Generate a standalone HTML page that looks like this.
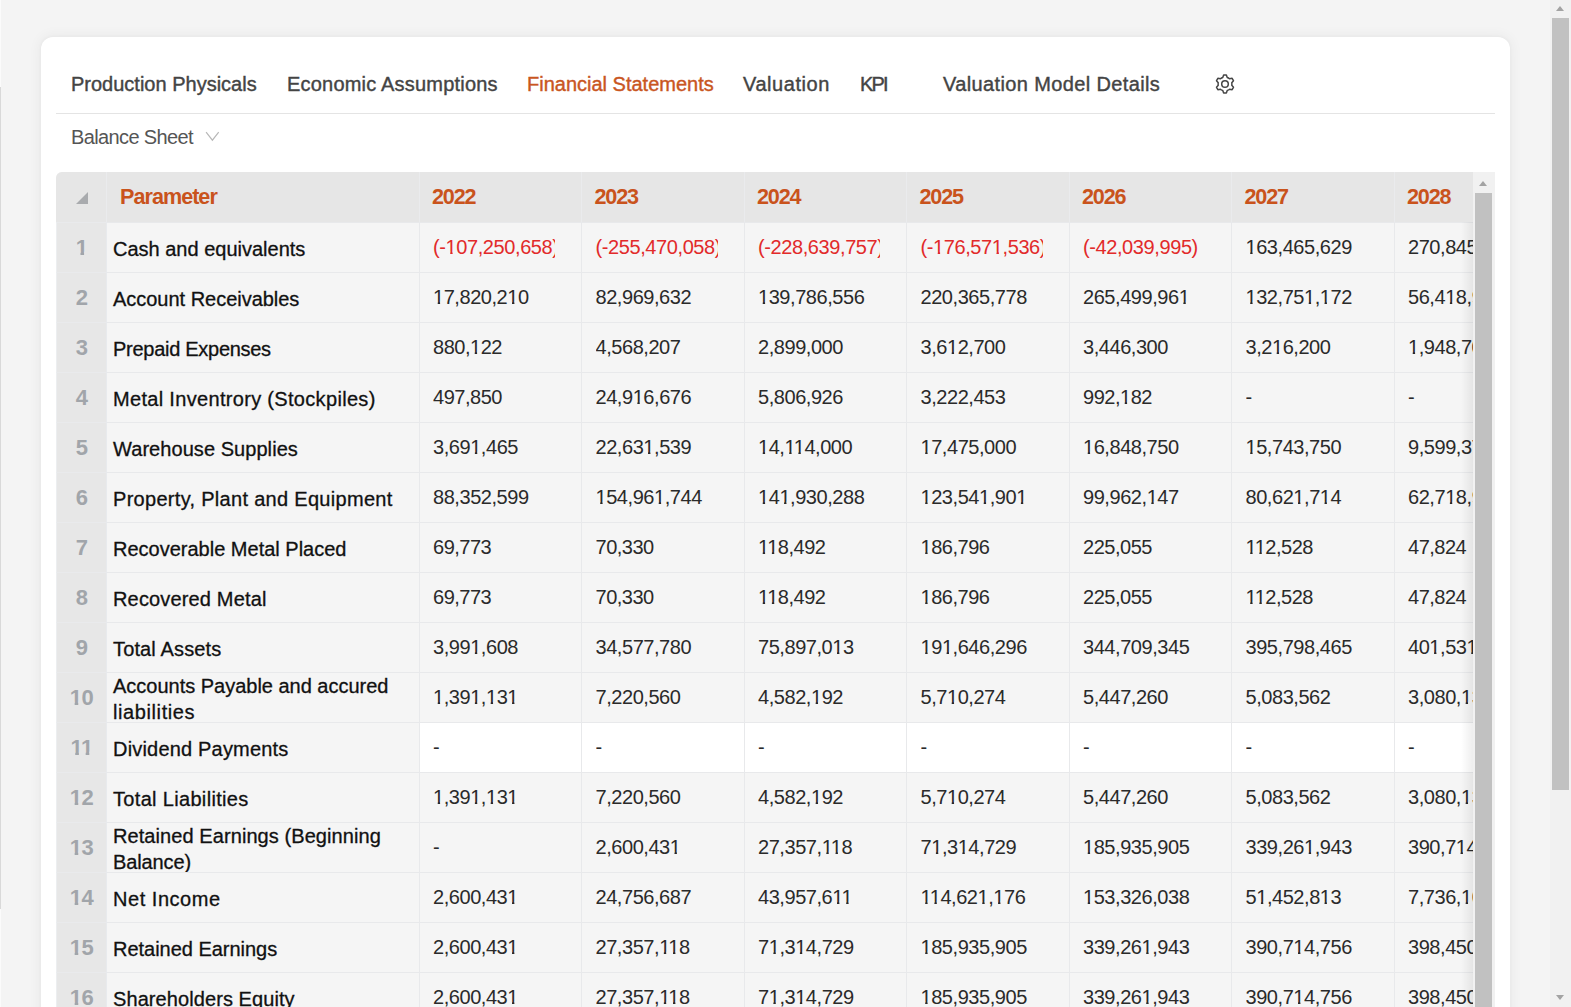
<!DOCTYPE html>
<html><head><meta charset="utf-8">
<style>
*{box-sizing:border-box;margin:0;padding:0}
html,body{width:1571px;height:1007px;overflow:hidden;background:#f4f4f4;font-family:"Liberation Sans",sans-serif}
#edge{position:absolute;left:0;top:87px;width:1px;height:822px;background:#d9d9d9}
#edgew1{position:absolute;left:0;top:0;width:1px;height:87px;background:#fbfbfb}
#edgew2{position:absolute;left:0;top:909px;width:1px;height:98px;background:#fbfbfb}
#card{position:absolute;left:41px;top:37px;width:1469px;height:1100px;background:#fff;border-radius:12px;box-shadow:0 0 3px 1px rgba(0,0,0,0.025),0 0 12px 3px rgba(0,0,0,0.04)}
.tab{position:absolute;top:72px;font-size:20px;line-height:24px;color:#444;white-space:nowrap;-webkit-text-stroke:0.4px #444}
.tab.act{color:#c9561f;-webkit-text-stroke:0.4px #c9561f}
#divider{position:absolute;left:56px;top:113px;width:1439px;height:1px;background:#e4e4e4}
#bs{position:absolute;left:71px;top:125px;font-size:20px;letter-spacing:-0.62px;line-height:24px;color:#555;white-space:nowrap}
#chev{position:absolute;left:205px;top:130px}
#gear{position:absolute;left:1213px;top:72px}
#tbl{position:absolute;left:56px;top:172px;width:1417px;height:900px;overflow:hidden;border-top-left-radius:6px;background:#f5f5f5}
.hc{position:absolute;background:#e6e6e6;border-left:1px solid #eaebed}
.hc.rn{border-left:none}
.ht{position:absolute;top:13px;font-weight:bold;font-size:21.6px;line-height:24px;color:#c9531c}
.tri{position:absolute;left:20px;top:20px;width:0;height:0;border-left:12px solid transparent;border-bottom:12px solid #a9abae}
.rnc{position:absolute;left:0;width:50px;height:50px;background:#e7e7e7;border-top:1px solid #e9eaec;border-left:1px solid #eceef0}
.rnc span{position:absolute;left:0;right:0;text-align:center;top:13px;font-weight:bold;font-size:22px;letter-spacing:-0.6px;line-height:24px;color:#a1a5aa}
.pc{position:absolute;left:50px;width:313px;height:50px;background:#f5f5f5;border-top:1px solid #e8e9eb;border-left:1px solid #e8eaed}
.pc span{position:absolute;left:6px;top:14px;font-size:20px;line-height:24px;color:#111;white-space:nowrap;-webkit-text-stroke:0.3px #111}
.pc.two span{top:0px;line-height:26px}
.dc{position:absolute;width:163px;height:50px;background:#f5f5f5;border-top:1px solid #e8e9eb;border-left:1px solid #e8e9eb}
.dc.wh{background:#fff}
.dv{position:absolute;left:13px;top:12px;width:122px;overflow:hidden;white-space:nowrap;font-size:20px;line-height:24px;color:#2a2a2a}
.o{font-style:normal;clip-path:polygon(-2px -2px,14px -2px,14px 15.8px,7.1px 15.8px,7.1px 30px,4.7px 30px,4.7px 15.8px,-2px 15.8px)}
.ob{font-style:normal;clip-path:polygon(-2px -2px,14px -2px,14px 16.7px,8.4px 16.7px,8.4px 30px,4.8px 30px,4.8px 16.7px,-2px 16.7px)}
.dv.neg{color:#e22a2a}
#tsb{position:absolute;left:1473px;top:172px;width:22px;height:900px;background:#f1f1f1}
#tsbthumb{position:absolute;left:2px;top:21px;width:17px;height:900px;background:#c1c1c1}
#tsbup{position:absolute;left:5.7px;top:9px;width:0;height:0;border-left:4.9px solid transparent;border-right:4.9px solid transparent;border-bottom:5px solid #a3a3a3}
#shade{position:absolute;left:1461px;top:222px;width:12px;height:800px;background:linear-gradient(to right,rgba(0,0,0,0),rgba(0,0,0,0.065))}
#psb{position:absolute;left:1550px;top:0;width:21px;height:1007px;background:#f1f1f1}
#psbthumb{position:absolute;left:2px;top:18px;width:17px;height:772px;background:#c1c1c1}
#psbup{position:absolute;left:5.8px;top:6px;width:0;height:0;border-left:4.7px solid transparent;border-right:4.7px solid transparent;border-bottom:5px solid #a3a3a3}
#psbdn{position:absolute;left:6px;top:995px;width:0;height:0;border-left:4.5px solid transparent;border-right:4.5px solid transparent;border-top:5px solid #a3a3a3}
</style></head><body>
<div id="edgew1"></div><div id="edge"></div><div id="edgew2"></div>
<div id="card"></div>
<div class="tab" style="left:71px">Production Physicals</div>
<div class="tab" style="left:287px;letter-spacing:0.2px">Economic Assumptions</div>
<div class="tab act" style="left:527px">Financial Statements</div>
<div class="tab" style="left:743px;letter-spacing:0.55px">Valuation</div>
<div class="tab" style="left:860px;letter-spacing:-1.9px">KPI</div>
<div class="tab" style="left:943px;letter-spacing:0.37px">Valuation Model Details</div>
<svg id="gear" width="24" height="24" viewBox="0 0 24 24"><path d="M9.75 5.48L10.65 3.00L13.35 3.00L14.25 5.48A6.9 6.9 0 0 1 16.53 6.79L19.12 6.34L20.47 8.66L18.77 10.68A6.9 6.9 0 0 1 18.77 13.32L20.47 15.34L19.12 17.66L16.53 17.21A6.9 6.9 0 0 1 14.25 18.52L13.35 21.00L10.65 21.00L9.75 18.52A6.9 6.9 0 0 1 7.47 17.21L4.88 17.66L3.53 15.34L5.23 13.32A6.9 6.9 0 0 1 5.23 10.68L3.53 8.66L4.88 6.34L7.47 6.79A6.9 6.9 0 0 1 9.75 5.48Z" fill="none" stroke="#454545" stroke-width="1.5" stroke-linejoin="round"/><circle cx="12" cy="12" r="3.3" fill="none" stroke="#454545" stroke-width="1.5"/></svg>
<div id="divider"></div>
<div id="bs">Balance Sheet</div>
<svg id="chev" width="16" height="13" viewBox="0 0 16 13"><path d="M1.1 2.1 L7.4 10.2 L13.7 2.1" fill="none" stroke="#b8b8b8" stroke-width="1.2"/></svg>
<div id="tbl">
<div class="hc rn" style="left:0;top:0;width:50px;height:50px"><i class="tri"></i></div><div class="hc" style="left:50px;top:0;width:313px;height:50px"><span class="ht" style="left:13px;letter-spacing:-0.98px">Parameter</span></div><div class="hc yc" style="left:363px;top:0;width:163px;height:50px"><span class="ht" style="left:12px;letter-spacing:-1.19px">2022</span></div><div class="hc yc" style="left:525px;top:0;width:163px;height:50px"><span class="ht" style="left:12.5px;letter-spacing:-1.19px">2023</span></div><div class="hc yc" style="left:688px;top:0;width:163px;height:50px"><span class="ht" style="left:12px;letter-spacing:-1.19px">2024</span></div><div class="hc yc" style="left:850px;top:0;width:163px;height:50px"><span class="ht" style="left:12.5px;letter-spacing:-1.19px">2025</span></div><div class="hc yc" style="left:1013px;top:0;width:163px;height:50px"><span class="ht" style="left:12px;letter-spacing:-1.19px">2026</span></div><div class="hc yc" style="left:1175px;top:0;width:163px;height:50px"><span class="ht" style="left:12.5px;letter-spacing:-1.19px">2027</span></div><div class="hc yc" style="left:1338px;top:0;width:163px;height:50px"><span class="ht" style="left:12px;letter-spacing:-1.19px">2028</span></div>
<div class="rnc" style="top:50px"><span><i class="ob">1</i></span></div><div class="pc" style="top:50px"><span style="letter-spacing:0.000px">Cash and equivalents</span></div><div class="dc" style="left:363px;top:50px"><div class="dv neg" style="left:13px;letter-spacing:-0.404px">(-<i class="o">1</i>07,250,658)</div></div><div class="dc" style="left:525px;top:50px"><div class="dv neg" style="left:13.5px;letter-spacing:-0.404px">(-255,470,058)</div></div><div class="dc" style="left:688px;top:50px"><div class="dv neg" style="left:13px;letter-spacing:-0.404px">(-228,639,757)</div></div><div class="dc" style="left:850px;top:50px"><div class="dv neg" style="left:13.5px;letter-spacing:-0.404px">(-<i class="o">1</i>76,57<i class="o">1</i>,536)</div></div><div class="dc" style="left:1013px;top:50px"><div class="dv neg" style="left:13px;letter-spacing:-0.400px">(-42,039,995)</div></div><div class="dc" style="left:1175px;top:50px"><div class="dv" style="left:13.5px;letter-spacing:-0.445px"><i class="o">1</i>63,465,629</div></div><div class="dc" style="left:1338px;top:50px"><div class="dv" style="left:13px;letter-spacing:-0.445px">270,845,000</div></div><div class="rnc" style="top:100px"><span>2</span></div><div class="pc" style="top:100px"><span style="letter-spacing:-0.022px">Account Receivables</span></div><div class="dc" style="left:363px;top:100px"><div class="dv" style="left:13px;letter-spacing:-0.445px"><i class="o">1</i>7,820,2<i class="o">1</i>0</div></div><div class="dc" style="left:525px;top:100px"><div class="dv" style="left:13.5px;letter-spacing:-0.445px">82,969,632</div></div><div class="dc" style="left:688px;top:100px"><div class="dv" style="left:13px;letter-spacing:-0.445px"><i class="o">1</i>39,786,556</div></div><div class="dc" style="left:850px;top:100px"><div class="dv" style="left:13.5px;letter-spacing:-0.445px">220,365,778</div></div><div class="dc" style="left:1013px;top:100px"><div class="dv" style="left:13px;letter-spacing:-0.445px">265,499,96<i class="o">1</i></div></div><div class="dc" style="left:1175px;top:100px"><div class="dv" style="left:13.5px;letter-spacing:-0.445px"><i class="o">1</i>32,75<i class="o">1</i>,<i class="o">1</i>72</div></div><div class="dc" style="left:1338px;top:100px"><div class="dv" style="left:13px;letter-spacing:-0.445px">56,4<i class="o">1</i>8,900</div></div><div class="rnc" style="top:150px"><span>3</span></div><div class="pc" style="top:150px"><span style="letter-spacing:-0.280px">Prepaid Expenses</span></div><div class="dc" style="left:363px;top:150px"><div class="dv" style="left:13px;letter-spacing:-0.482px">880,<i class="o">1</i>22</div></div><div class="dc" style="left:525px;top:150px"><div class="dv" style="left:13.5px;letter-spacing:-0.445px">4,568,207</div></div><div class="dc" style="left:688px;top:150px"><div class="dv" style="left:13px;letter-spacing:-0.445px">2,899,000</div></div><div class="dc" style="left:850px;top:150px"><div class="dv" style="left:13.5px;letter-spacing:-0.445px">3,6<i class="o">1</i>2,700</div></div><div class="dc" style="left:1013px;top:150px"><div class="dv" style="left:13px;letter-spacing:-0.445px">3,446,300</div></div><div class="dc" style="left:1175px;top:150px"><div class="dv" style="left:13.5px;letter-spacing:-0.445px">3,2<i class="o">1</i>6,200</div></div><div class="dc" style="left:1338px;top:150px"><div class="dv" style="left:13px;letter-spacing:-0.445px"><i class="o">1</i>,948,700</div></div><div class="rnc" style="top:200px"><span>4</span></div><div class="pc" style="top:200px"><span style="letter-spacing:0.318px">Metal Inventrory (Stockpiles)</span></div><div class="dc" style="left:363px;top:200px"><div class="dv" style="left:13px;letter-spacing:-0.482px">497,850</div></div><div class="dc" style="left:525px;top:200px"><div class="dv" style="left:13.5px;letter-spacing:-0.445px">24,9<i class="o">1</i>6,676</div></div><div class="dc" style="left:688px;top:200px"><div class="dv" style="left:13px;letter-spacing:-0.445px">5,806,926</div></div><div class="dc" style="left:850px;top:200px"><div class="dv" style="left:13.5px;letter-spacing:-0.445px">3,222,453</div></div><div class="dc" style="left:1013px;top:200px"><div class="dv" style="left:13px;letter-spacing:-0.482px">992,<i class="o">1</i>82</div></div><div class="dc" style="left:1175px;top:200px"><div class="dv" style="left:13.5px;letter-spacing:0.000px">-</div></div><div class="dc" style="left:1338px;top:200px"><div class="dv" style="left:13px;letter-spacing:0.000px">-</div></div><div class="rnc" style="top:250px"><span>5</span></div><div class="pc" style="top:250px"><span style="letter-spacing:0.059px">Warehouse Supplies</span></div><div class="dc" style="left:363px;top:250px"><div class="dv" style="left:13px;letter-spacing:-0.445px">3,69<i class="o">1</i>,465</div></div><div class="dc" style="left:525px;top:250px"><div class="dv" style="left:13.5px;letter-spacing:-0.445px">22,63<i class="o">1</i>,539</div></div><div class="dc" style="left:688px;top:250px"><div class="dv" style="left:13px;letter-spacing:-0.445px"><i class="o">1</i>4,<i class="o">1</i><i class="o">1</i>4,000</div></div><div class="dc" style="left:850px;top:250px"><div class="dv" style="left:13.5px;letter-spacing:-0.445px"><i class="o">1</i>7,475,000</div></div><div class="dc" style="left:1013px;top:250px"><div class="dv" style="left:13px;letter-spacing:-0.445px"><i class="o">1</i>6,848,750</div></div><div class="dc" style="left:1175px;top:250px"><div class="dv" style="left:13.5px;letter-spacing:-0.445px"><i class="o">1</i>5,743,750</div></div><div class="dc" style="left:1338px;top:250px"><div class="dv" style="left:13px;letter-spacing:-0.445px">9,599,375</div></div><div class="rnc" style="top:300px"><span>6</span></div><div class="pc" style="top:300px"><span style="letter-spacing:0.300px">Property, Plant and Equipment</span></div><div class="dc" style="left:363px;top:300px"><div class="dv" style="left:13px;letter-spacing:-0.445px">88,352,599</div></div><div class="dc" style="left:525px;top:300px"><div class="dv" style="left:13.5px;letter-spacing:-0.445px"><i class="o">1</i>54,96<i class="o">1</i>,744</div></div><div class="dc" style="left:688px;top:300px"><div class="dv" style="left:13px;letter-spacing:-0.445px"><i class="o">1</i>4<i class="o">1</i>,930,288</div></div><div class="dc" style="left:850px;top:300px"><div class="dv" style="left:13.5px;letter-spacing:-0.445px"><i class="o">1</i>23,54<i class="o">1</i>,90<i class="o">1</i></div></div><div class="dc" style="left:1013px;top:300px"><div class="dv" style="left:13px;letter-spacing:-0.445px">99,962,<i class="o">1</i>47</div></div><div class="dc" style="left:1175px;top:300px"><div class="dv" style="left:13.5px;letter-spacing:-0.445px">80,62<i class="o">1</i>,7<i class="o">1</i>4</div></div><div class="dc" style="left:1338px;top:300px"><div class="dv" style="left:13px;letter-spacing:-0.445px">62,7<i class="o">1</i>8,900</div></div><div class="rnc" style="top:350px"><span>7</span></div><div class="pc" style="top:350px"><span style="letter-spacing:0.000px">Recoverable Metal Placed</span></div><div class="dc" style="left:363px;top:350px"><div class="dv" style="left:13px;letter-spacing:-0.489px">69,773</div></div><div class="dc" style="left:525px;top:350px"><div class="dv" style="left:13.5px;letter-spacing:-0.489px">70,330</div></div><div class="dc" style="left:688px;top:350px"><div class="dv" style="left:13px;letter-spacing:-0.482px"><i class="o">1</i><i class="o">1</i>8,492</div></div><div class="dc" style="left:850px;top:350px"><div class="dv" style="left:13.5px;letter-spacing:-0.482px"><i class="o">1</i>86,796</div></div><div class="dc" style="left:1013px;top:350px"><div class="dv" style="left:13px;letter-spacing:-0.482px">225,055</div></div><div class="dc" style="left:1175px;top:350px"><div class="dv" style="left:13.5px;letter-spacing:-0.482px"><i class="o">1</i><i class="o">1</i>2,528</div></div><div class="dc" style="left:1338px;top:350px"><div class="dv" style="left:13px;letter-spacing:-0.489px">47,824</div></div><div class="rnc" style="top:400px"><span>8</span></div><div class="pc" style="top:400px"><span style="letter-spacing:0.157px">Recovered Metal</span></div><div class="dc" style="left:363px;top:400px"><div class="dv" style="left:13px;letter-spacing:-0.489px">69,773</div></div><div class="dc" style="left:525px;top:400px"><div class="dv" style="left:13.5px;letter-spacing:-0.489px">70,330</div></div><div class="dc" style="left:688px;top:400px"><div class="dv" style="left:13px;letter-spacing:-0.482px"><i class="o">1</i><i class="o">1</i>8,492</div></div><div class="dc" style="left:850px;top:400px"><div class="dv" style="left:13.5px;letter-spacing:-0.482px"><i class="o">1</i>86,796</div></div><div class="dc" style="left:1013px;top:400px"><div class="dv" style="left:13px;letter-spacing:-0.482px">225,055</div></div><div class="dc" style="left:1175px;top:400px"><div class="dv" style="left:13.5px;letter-spacing:-0.482px"><i class="o">1</i><i class="o">1</i>2,528</div></div><div class="dc" style="left:1338px;top:400px"><div class="dv" style="left:13px;letter-spacing:-0.489px">47,824</div></div><div class="rnc" style="top:450px"><span>9</span></div><div class="pc" style="top:450px"><span style="letter-spacing:0.136px">Total Assets</span></div><div class="dc" style="left:363px;top:450px"><div class="dv" style="left:13px;letter-spacing:-0.445px">3,99<i class="o">1</i>,608</div></div><div class="dc" style="left:525px;top:450px"><div class="dv" style="left:13.5px;letter-spacing:-0.445px">34,577,780</div></div><div class="dc" style="left:688px;top:450px"><div class="dv" style="left:13px;letter-spacing:-0.445px">75,897,0<i class="o">1</i>3</div></div><div class="dc" style="left:850px;top:450px"><div class="dv" style="left:13.5px;letter-spacing:-0.445px"><i class="o">1</i>9<i class="o">1</i>,646,296</div></div><div class="dc" style="left:1013px;top:450px"><div class="dv" style="left:13px;letter-spacing:-0.445px">344,709,345</div></div><div class="dc" style="left:1175px;top:450px"><div class="dv" style="left:13.5px;letter-spacing:-0.445px">395,798,465</div></div><div class="dc" style="left:1338px;top:450px"><div class="dv" style="left:13px;letter-spacing:-0.445px">40<i class="o">1</i>,53<i class="o">1</i>,000</div></div><div class="rnc" style="top:500px"><span><i class="ob">1</i>0</span></div><div class="pc two" style="top:500px"><span style="letter-spacing:-0.011px">Accounts Payable and accured</span><span style="top:26px;letter-spacing:0.600px">liabilities</span></div><div class="dc" style="left:363px;top:500px"><div class="dv" style="left:13px;letter-spacing:-0.445px"><i class="o">1</i>,39<i class="o">1</i>,<i class="o">1</i>3<i class="o">1</i></div></div><div class="dc" style="left:525px;top:500px"><div class="dv" style="left:13.5px;letter-spacing:-0.445px">7,220,560</div></div><div class="dc" style="left:688px;top:500px"><div class="dv" style="left:13px;letter-spacing:-0.445px">4,582,<i class="o">1</i>92</div></div><div class="dc" style="left:850px;top:500px"><div class="dv" style="left:13.5px;letter-spacing:-0.445px">5,7<i class="o">1</i>0,274</div></div><div class="dc" style="left:1013px;top:500px"><div class="dv" style="left:13px;letter-spacing:-0.445px">5,447,260</div></div><div class="dc" style="left:1175px;top:500px"><div class="dv" style="left:13.5px;letter-spacing:-0.445px">5,083,562</div></div><div class="dc" style="left:1338px;top:500px"><div class="dv" style="left:13px;letter-spacing:-0.445px">3,080,<i class="o">1</i>32</div></div><div class="rnc" style="top:550px"><span><i class="ob">1</i><i class="ob">1</i></span></div><div class="pc" style="top:550px"><span style="letter-spacing:0.188px">Dividend Payments</span></div><div class="dc wh" style="left:363px;top:550px"><div class="dv" style="left:13px;letter-spacing:0.000px">-</div></div><div class="dc wh" style="left:525px;top:550px"><div class="dv" style="left:13.5px;letter-spacing:0.000px">-</div></div><div class="dc wh" style="left:688px;top:550px"><div class="dv" style="left:13px;letter-spacing:0.000px">-</div></div><div class="dc wh" style="left:850px;top:550px"><div class="dv" style="left:13.5px;letter-spacing:0.000px">-</div></div><div class="dc wh" style="left:1013px;top:550px"><div class="dv" style="left:13px;letter-spacing:0.000px">-</div></div><div class="dc wh" style="left:1175px;top:550px"><div class="dv" style="left:13.5px;letter-spacing:0.000px">-</div></div><div class="dc wh" style="left:1338px;top:550px"><div class="dv" style="left:13px;letter-spacing:0.000px">-</div></div><div class="rnc" style="top:600px"><span><i class="ob">1</i>2</span></div><div class="pc" style="top:600px"><span style="letter-spacing:0.325px">Total Liabilities</span></div><div class="dc" style="left:363px;top:600px"><div class="dv" style="left:13px;letter-spacing:-0.445px"><i class="o">1</i>,39<i class="o">1</i>,<i class="o">1</i>3<i class="o">1</i></div></div><div class="dc" style="left:525px;top:600px"><div class="dv" style="left:13.5px;letter-spacing:-0.445px">7,220,560</div></div><div class="dc" style="left:688px;top:600px"><div class="dv" style="left:13px;letter-spacing:-0.445px">4,582,<i class="o">1</i>92</div></div><div class="dc" style="left:850px;top:600px"><div class="dv" style="left:13.5px;letter-spacing:-0.445px">5,7<i class="o">1</i>0,274</div></div><div class="dc" style="left:1013px;top:600px"><div class="dv" style="left:13px;letter-spacing:-0.445px">5,447,260</div></div><div class="dc" style="left:1175px;top:600px"><div class="dv" style="left:13.5px;letter-spacing:-0.445px">5,083,562</div></div><div class="dc" style="left:1338px;top:600px"><div class="dv" style="left:13px;letter-spacing:-0.445px">3,080,<i class="o">1</i>32</div></div><div class="rnc" style="top:650px"><span><i class="ob">1</i>3</span></div><div class="pc two" style="top:650px"><span style="letter-spacing:0.078px">Retained Earnings (Beginning</span><span style="top:26px;letter-spacing:-0.114px">Balance)</span></div><div class="dc" style="left:363px;top:650px"><div class="dv" style="left:13px;letter-spacing:0.000px">-</div></div><div class="dc" style="left:525px;top:650px"><div class="dv" style="left:13.5px;letter-spacing:-0.445px">2,600,43<i class="o">1</i></div></div><div class="dc" style="left:688px;top:650px"><div class="dv" style="left:13px;letter-spacing:-0.445px">27,357,<i class="o">1</i><i class="o">1</i>8</div></div><div class="dc" style="left:850px;top:650px"><div class="dv" style="left:13.5px;letter-spacing:-0.445px">7<i class="o">1</i>,3<i class="o">1</i>4,729</div></div><div class="dc" style="left:1013px;top:650px"><div class="dv" style="left:13px;letter-spacing:-0.445px"><i class="o">1</i>85,935,905</div></div><div class="dc" style="left:1175px;top:650px"><div class="dv" style="left:13.5px;letter-spacing:-0.445px">339,26<i class="o">1</i>,943</div></div><div class="dc" style="left:1338px;top:650px"><div class="dv" style="left:13px;letter-spacing:-0.445px">390,7<i class="o">1</i>4,756</div></div><div class="rnc" style="top:700px"><span><i class="ob">1</i>4</span></div><div class="pc" style="top:700px"><span style="letter-spacing:0.533px">Net Income</span></div><div class="dc" style="left:363px;top:700px"><div class="dv" style="left:13px;letter-spacing:-0.445px">2,600,43<i class="o">1</i></div></div><div class="dc" style="left:525px;top:700px"><div class="dv" style="left:13.5px;letter-spacing:-0.445px">24,756,687</div></div><div class="dc" style="left:688px;top:700px"><div class="dv" style="left:13px;letter-spacing:-0.445px">43,957,6<i class="o">1</i><i class="o">1</i></div></div><div class="dc" style="left:850px;top:700px"><div class="dv" style="left:13.5px;letter-spacing:-0.445px"><i class="o">1</i><i class="o">1</i>4,62<i class="o">1</i>,<i class="o">1</i>76</div></div><div class="dc" style="left:1013px;top:700px"><div class="dv" style="left:13px;letter-spacing:-0.445px"><i class="o">1</i>53,326,038</div></div><div class="dc" style="left:1175px;top:700px"><div class="dv" style="left:13.5px;letter-spacing:-0.445px">5<i class="o">1</i>,452,8<i class="o">1</i>3</div></div><div class="dc" style="left:1338px;top:700px"><div class="dv" style="left:13px;letter-spacing:-0.445px">7,736,<i class="o">1</i>00</div></div><div class="rnc" style="top:750px"><span><i class="ob">1</i>5</span></div><div class="pc" style="top:750px"><span style="letter-spacing:-0.025px">Retained Earnings</span></div><div class="dc" style="left:363px;top:750px"><div class="dv" style="left:13px;letter-spacing:-0.445px">2,600,43<i class="o">1</i></div></div><div class="dc" style="left:525px;top:750px"><div class="dv" style="left:13.5px;letter-spacing:-0.445px">27,357,<i class="o">1</i><i class="o">1</i>8</div></div><div class="dc" style="left:688px;top:750px"><div class="dv" style="left:13px;letter-spacing:-0.445px">7<i class="o">1</i>,3<i class="o">1</i>4,729</div></div><div class="dc" style="left:850px;top:750px"><div class="dv" style="left:13.5px;letter-spacing:-0.445px"><i class="o">1</i>85,935,905</div></div><div class="dc" style="left:1013px;top:750px"><div class="dv" style="left:13px;letter-spacing:-0.445px">339,26<i class="o">1</i>,943</div></div><div class="dc" style="left:1175px;top:750px"><div class="dv" style="left:13.5px;letter-spacing:-0.445px">390,7<i class="o">1</i>4,756</div></div><div class="dc" style="left:1338px;top:750px"><div class="dv" style="left:13px;letter-spacing:-0.445px">398,450,000</div></div><div class="rnc" style="top:800px"><span><i class="ob">1</i>6</span></div><div class="pc" style="top:800px"><span style="letter-spacing:0.083px">Shareholders Equity</span></div><div class="dc" style="left:363px;top:800px"><div class="dv" style="left:13px;letter-spacing:-0.445px">2,600,43<i class="o">1</i></div></div><div class="dc" style="left:525px;top:800px"><div class="dv" style="left:13.5px;letter-spacing:-0.445px">27,357,<i class="o">1</i><i class="o">1</i>8</div></div><div class="dc" style="left:688px;top:800px"><div class="dv" style="left:13px;letter-spacing:-0.445px">7<i class="o">1</i>,3<i class="o">1</i>4,729</div></div><div class="dc" style="left:850px;top:800px"><div class="dv" style="left:13.5px;letter-spacing:-0.445px"><i class="o">1</i>85,935,905</div></div><div class="dc" style="left:1013px;top:800px"><div class="dv" style="left:13px;letter-spacing:-0.445px">339,26<i class="o">1</i>,943</div></div><div class="dc" style="left:1175px;top:800px"><div class="dv" style="left:13.5px;letter-spacing:-0.445px">390,7<i class="o">1</i>4,756</div></div><div class="dc" style="left:1338px;top:800px"><div class="dv" style="left:13px;letter-spacing:-0.445px">398,450,000</div></div>
</div>
<div id="shade"></div>
<div id="tsb"><div id="tsbup"></div><div id="tsbthumb"></div></div>
<div id="psb"><div id="psbup"></div><div id="psbthumb"></div><div id="psbdn"></div></div>
</body></html>
